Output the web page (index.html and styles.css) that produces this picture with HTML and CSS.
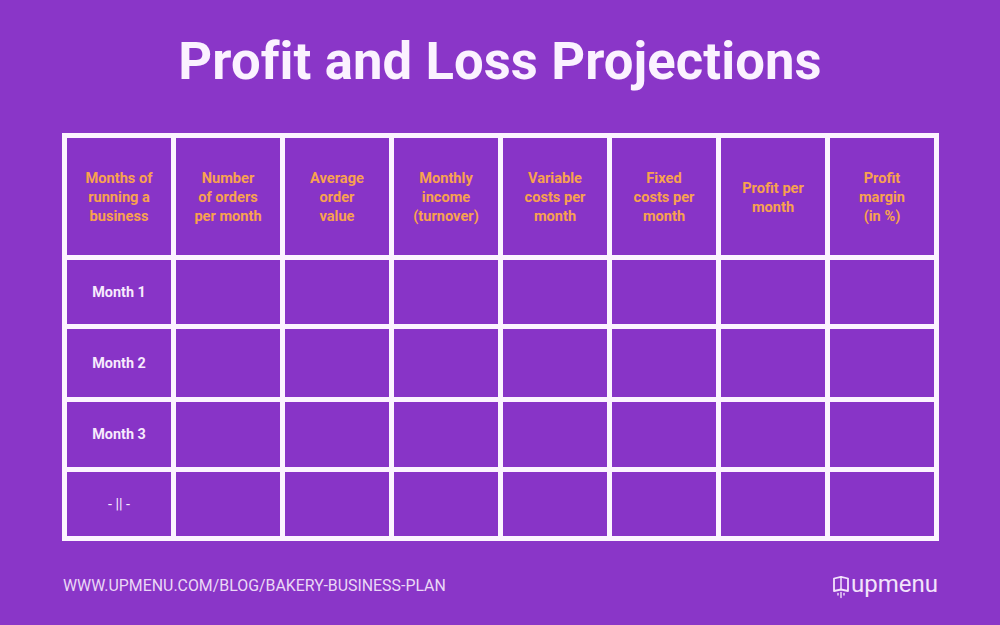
FILE: index.html
```html
<!DOCTYPE html>
<html>
<head>
<meta charset="utf-8">
<link rel="stylesheet" href="styles.css">
</head>
<body>
<div class="page">
  <h1 class="title">Profit and Loss Projections</h1>
  <div class="grid">
    <div class="cell head">Months of<br>running a<br>business</div>
    <div class="cell head">Number<br>of orders<br>per month</div>
    <div class="cell head">Average<br>order<br>value</div>
    <div class="cell head">Monthly<br>income<br>(turnover)</div>
    <div class="cell head">Variable<br>costs per<br>month</div>
    <div class="cell head">Fixed<br>costs per<br>month</div>
    <div class="cell head">Profit per<br>month</div>
    <div class="cell head">Profit<br>margin<br>(in %)</div>

    <div class="cell label">Month 1</div>
    <div class="cell"></div><div class="cell"></div><div class="cell"></div><div class="cell"></div><div class="cell"></div><div class="cell"></div><div class="cell"></div>

    <div class="cell label">Month 2</div>
    <div class="cell"></div><div class="cell"></div><div class="cell"></div><div class="cell"></div><div class="cell"></div><div class="cell"></div><div class="cell"></div>

    <div class="cell label">Month 3</div>
    <div class="cell"></div><div class="cell"></div><div class="cell"></div><div class="cell"></div><div class="cell"></div><div class="cell"></div><div class="cell"></div>

    <div class="cell label ditto">- || -</div>
    <div class="cell"></div><div class="cell"></div><div class="cell"></div><div class="cell"></div><div class="cell"></div><div class="cell"></div><div class="cell"></div>
  </div>
  <div class="footer">
    <span class="url">WWW.UPMENU.COM/BLOG/BAKERY-BUSINESS-PLAN</span>
    <span class="logo">
      <svg class="logo-icon" width="18" height="24" viewBox="0 0 18 24" fill="none" stroke="#f3e3fb" stroke-width="1.8" stroke-linejoin="round" stroke-linecap="round">
        <path d="M2 3.5 L9 1.8 L16 3.5 L16 16 L9 14.5 L2 16 Z"/>
        <path d="M9 1.8 L9 14.5" stroke-width="1.5"/>
        <path d="M6 18.5 L6 20" stroke-width="1.4"/>
        <path d="M9 17.5 L9 22.5" stroke-width="1.4"/>
        <path d="M12 18.5 L12 20" stroke-width="1.4"/>
      </svg>
      <span class="logo-text">upmenu</span>
    </span>
  </div>
</div>
</body>
</html>
```

FILE: styles.css
```css
html, body {
  margin: 0;
  padding: 0;
}
body {
  width: 1000px;
  height: 625px;
  background: #8a36c8;
  font-family: Roboto, "Liberation Sans", sans-serif;
  overflow: hidden;
}
.page {
  display: flex;
  flex-direction: column;
  padding: 35px 0 0 0;
}
.title {
  margin: 0;
  text-align: center;
  color: #fbf2ff;
  font-size: 52.6px;
  line-height: 52px;
  font-weight: 700;
  letter-spacing: 0.1px;
}
.grid {
  margin: 46px 0 0 62px;
  width: 877px;
  box-sizing: border-box;
  display: grid;
  grid-template-columns: repeat(8, 1fr);
  grid-template-rows: 117px 64px 68px 65px 64px;
  gap: 5px;
  padding: 5px;
  background: #fcf4ff;
}
.cell {
  background: #8834c7;
  display: flex;
  align-items: center;
  justify-content: center;
  text-align: center;
}
.head {
  color: #f8a24f;
  font-weight: 700;
  font-size: 14.6px;
  line-height: 19px;
  padding-top: 2px;
}
.label {
  color: #f7ebfd;
  font-weight: 700;
  font-size: 14.4px;
  line-height: 19px;
}
.ditto {
  font-weight: 400;
}
.footer {
  margin: 31px 62px 0 63px;
  display: flex;
  justify-content: space-between;
  align-items: center;
}
.url {
  color: #ead8f6;
  font-size: 15.9px;
  line-height: 18px;
  letter-spacing: 0;
}
.logo {
  display: flex;
  align-items: center;
  gap: 1px;
}
.logo-icon {
  display: block;
  margin-top: 3px;
}
.logo-text {
  color: #f3e3fb;
  font-size: 24px;
  line-height: 24px;
  font-weight: 400;
  margin-top: -4px;
}
```
